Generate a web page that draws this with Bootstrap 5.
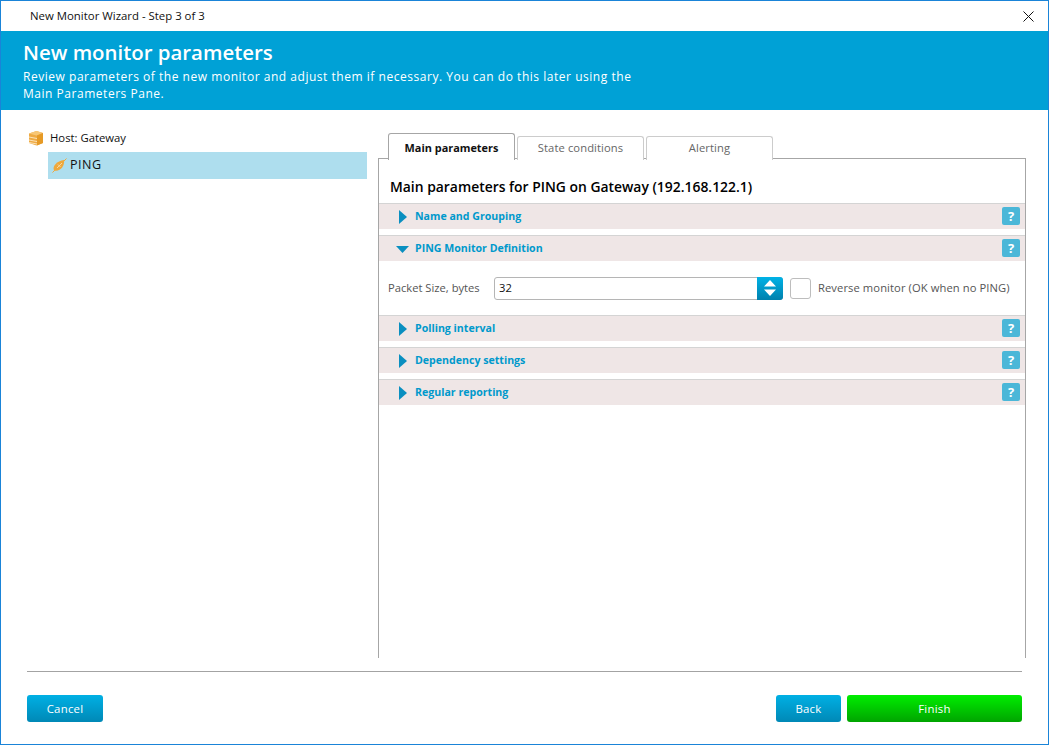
<!DOCTYPE html>
<html lang="en">

<head>
    <meta charset="UTF-8">
    <meta name="viewport" content="width=device-width, initial-scale=1.0">
    <title>New Monitor Wizard</title>
    <link href="https://cdn.jsdelivr.net/npm/bootstrap@5.3.1/dist/css/bootstrap.min.css" rel="stylesheet">
    <style>
        html, body { height: 100%; }
        body { font-family: "Open Sans", "Noto Sans", sans-serif; font-size: 12px; color: #111; background: #fff; overflow: hidden; }

        /* window frame */
        .wiz-window { width: 1049px; height: 745px; border: 1px solid #1a84d8; }
        .wiz-titlebar { height: 30px; padding: 0 14px 0 29px; font-size: 11.4px; color: #111; }
        .wiz-close { width: 11px; height: 11px; }
        .wiz-banner { height: 79px; background: #00a1d6; color: #fff; padding: 9px 0 0 22px; }
        .wiz-banner-title { font-size: 20.4px; font-weight: 600; line-height: 25px; margin: 0; }
        .wiz-banner-text { font-size: 12px; line-height: 17px; width: 620px; letter-spacing: .53px; margin: 3px 0 0; }

        /* left tree */
        .wiz-main { height: 548px; }
        .wiz-tree { width: 377px; padding: 18px 11px 0 28px; }
        .tree-host { height: 20px; gap: 5px; font-size: 11.3px; }
        .tree-monitor { height: 27px; margin: 4px 0 0 19px; padding-left: 4px; gap: 3px; background: #aedeee; font-size: 12.5px; letter-spacing: .5px; }

        /* tabs */
        .wiz-right { width: 648px; padding-top: 23px; }
        .wiz-tabs { padding-left: 10px; gap: 2px; border-bottom: 0; height: 26px; position: relative; z-index: 1; align-items: flex-end; }
        .wiz-tabs .nav-link { width: 127px; height: 24px; padding: 3px 0 0; margin: 0 0 -1px; text-align: center; font-size: 11.2px; letter-spacing: .1px; color: #666; background: #fff; border: 1px solid #ccc; border-bottom: 0; border-radius: 3px 3px 0 0; }
        .wiz-tabs .nav-link.active { height: 27px; padding-top: 6px; color: #111; font-weight: 700; font-size: 10.9px; letter-spacing: 0; border-color: #a6a6a6; }
        .wiz-panel { height: 500px; border: 1px solid #a6a6a6; border-bottom: 0; margin-top: -1px; }
        .panel-caption { font-size: 13.9px; font-weight: 600; height: 44px; padding: 18px 0 0 11px; line-height: 20px; color: #000; }

        /* collapsible section headers */
        .sect-head { height: 26px; margin-bottom: 6px; background: #efe6e6; border-top: 1px solid #d4d4d4; padding-right: 5px; }
        .sect-arrow { width: 36px; flex: none; padding-left: 17px; }
        .sect-name { color: #0099cc; font-size: 10.6px; font-weight: 700; }
        .sect-help { width: 18px; height: 18px; margin-top: -1px; background: #4bb7d8; color: #fff; border-radius: 2px; font-weight: 700; font-size: 13px; line-height: 18px; text-align: center; }

        /* packet size row */
        .packet-row { height: 54px; margin-top: -6px; padding: 0 0 0 9px; color: #555; font-size: 11.2px; }
        .packet-label { width: 106px; }
        .packet-reverse { letter-spacing: .09px; }
        .packet-box { width: 289px; height: 23px; border: 1px solid #b5b5b5; border-radius: 3px; }
        .packet-box input { border: 0; outline: 0; flex: 1; min-width: 0; padding: 0 4px; font: inherit; color: #111; background: transparent; }
        .packet-spin { width: 26px; height: 23px; margin: -1px -1px -1px 0; background: linear-gradient(#00b2e6, #0080ad); border-radius: 0 3px 3px 0; }
        .packet-check { width: 21px; height: 21px; margin: 0 7px; border: 1px solid #bdbdbd; border-radius: 3px; background: #fff; }

        /* footer */
        .wiz-foot { padding: 13px 26px 0; }
        .wiz-rule { height: 1px; background: #a3a3a3; margin-bottom: 23px; width: 995px; }
        .wiz-btn-row { width: 995px; }
        .wiz-btn { height: 27px; padding: 0; border: 0; border-radius: 3px; color: #fff; font-size: 11.4px; letter-spacing: .25px; background: linear-gradient(#00b0e4, #0088b6); }
        .wiz-btn-cancel { width: 76px; }
        .wiz-btn-back { width: 65px; margin-right: 6px; }
        .wiz-btn-finish { width: 175px; background: linear-gradient(#00ee00, #00a400); }
    </style>
</head>

<body>

    <div class="wiz-window d-flex flex-column">
        <!-- title bar -->
        <div class="wiz-titlebar d-flex align-items-center justify-content-between">
            <span>New Monitor Wizard - Step 3 of 3</span>
            <svg class="wiz-close" viewBox="0 0 11 11"><path d="M.5.5l10 10M10.500.5l-10 10" stroke="#111" fill="none"/></svg>
        </div>

        <div class="wiz-banner">
            <h1 class="wiz-banner-title">New monitor parameters</h1>
            <p class="wiz-banner-text">Review parameters of the new monitor and adjust them if necessary. You can do this later using the Main Parameters Pane.</p>
        </div>

        <div class="wiz-main d-flex">
            <!-- tree -->
            <div class="wiz-tree">
                <div class="tree-host d-flex align-items-center">
                    <svg width="16" height="16" viewBox="1 0 16 16">
                        <path d="M1 3.500L8.500 1 15 3v10l-6.500 2.500L1 13z" fill="#eeaa44"/>
                        <path d="M1 3.500L8.500 1 15 3 8.500 5.500z" fill="#f7c675"/>
                        <path d="M9 5.500L15 3v10l-6 2.500z" fill="#e69a26"/>
                        <path d="M1 7l8 1.500M1 10l8 1.500M1 12.500l8 1.500" stroke="#fbe2b8" fill="none"/>
                    </svg>
                    <span>Host: Gateway</span>
                </div>
                <div class="tree-monitor d-flex align-items-center">
                    <svg width="15" height="15" viewBox="0 0 15 15">
                        <path d="M2 12.500C0 8 5 3 12 2c1 6-4 12-10 10.500z" fill="#efa83c"/>
                        <path d="M.5 14.500l4-4M10.500 4.500l4-4" stroke="#efa83c" fill="none"/>
                        <path d="M5 10l5-5M6 6.500l2.500 2.500" stroke="#f8d9a0" fill="none"/>
                    </svg>
                    <span>PING</span>
                </div>
            </div>

            <!-- parameters -->
            <div class="wiz-right">
                <ul class="nav wiz-tabs">
                    <li class="nav-item"><a class="nav-link active" href="#">Main parameters</a></li>
                    <li class="nav-item"><a class="nav-link" href="#">State conditions</a></li>
                    <li class="nav-item"><a class="nav-link" href="#">Alerting</a></li>
                </ul>
                <div class="wiz-panel">
                    <div class="panel-caption">Main parameters for PING on Gateway (192.168.122.1)</div>

                    <div class="sect-head d-flex align-items-center">
                        <span class="sect-arrow d-flex"><svg width="14" height="14" viewBox="0 0 14 14"><path d="M3 0l8 7-8 7z" fill="#0a8fc0"/></svg></span>
                        <span class="sect-name flex-grow-1">Name and Grouping</span>
                        <span class="sect-help">?</span>
                    </div>
                    <div class="sect-head d-flex align-items-center">
                        <span class="sect-arrow d-flex"><svg width="14" height="14" viewBox="0 0 14 14"><path d="M0 4h13l-6.500 7z" fill="#0a8fc0"/></svg></span>
                        <span class="sect-name flex-grow-1">PING Monitor Definition</span>
                        <span class="sect-help">?</span>
                    </div>

                    <div class="packet-row d-flex align-items-center">
                        <span class="packet-label">Packet Size, bytes</span>
                        <div class="packet-box d-flex align-items-center">
                            <input type="text" value="32">
                            <span class="packet-spin d-flex align-items-center justify-content-center">
                                <svg width="14" height="16" viewBox="0 0 14 16"><path d="M7 0l6 6.500H1zM1 9.500h12L7 16z" fill="#fff"/></svg>
                            </span>
                        </div>
                        <span class="packet-check"></span>
                        <span class="packet-reverse">Reverse monitor (OK when no PING)</span>
                    </div>

                    <div class="sect-head d-flex align-items-center">
                        <span class="sect-arrow d-flex"><svg width="14" height="14" viewBox="0 0 14 14"><path d="M3 0l8 7-8 7z" fill="#0a8fc0"/></svg></span>
                        <span class="sect-name flex-grow-1">Polling interval</span>
                        <span class="sect-help">?</span>
                    </div>
                    <div class="sect-head d-flex align-items-center">
                        <span class="sect-arrow d-flex"><svg width="14" height="14" viewBox="0 0 14 14"><path d="M3 0l8 7-8 7z" fill="#0a8fc0"/></svg></span>
                        <span class="sect-name flex-grow-1">Dependency settings</span>
                        <span class="sect-help">?</span>
                    </div>
                    <div class="sect-head d-flex align-items-center">
                        <span class="sect-arrow d-flex"><svg width="14" height="14" viewBox="0 0 14 14"><path d="M3 0l8 7-8 7z" fill="#0a8fc0"/></svg></span>
                        <span class="sect-name flex-grow-1">Regular reporting</span>
                        <span class="sect-help">?</span>
                    </div>
                </div>
            </div>
        </div>

        <!-- footer -->
        <div class="wiz-foot">
            <div class="wiz-rule"></div>
            <div class="wiz-btn-row d-flex">
                <button class="btn wiz-btn wiz-btn-cancel me-auto">Cancel</button>
                <button class="btn wiz-btn wiz-btn-back">Back</button>
                <button class="btn wiz-btn wiz-btn-finish">Finish</button>
            </div>
        </div>
    </div>

</body>

</html>
